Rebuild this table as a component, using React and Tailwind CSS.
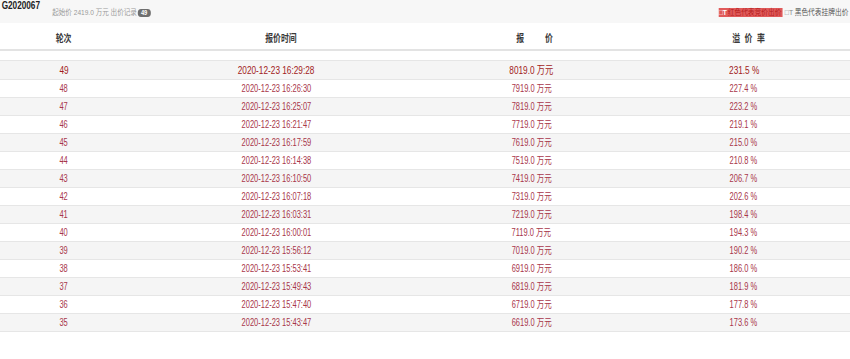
import React from "react";

const rows = [
  ["48", "2020-12-23 16:26:30", "7919.0", "227.4"],
  ["47", "2020-12-23 16:25:07", "7819.0", "223.2"],
  ["46", "2020-12-23 16:21:47", "7719.0", "219.1"],
  ["45", "2020-12-23 16:17:59", "7619.0", "215.0"],
  ["44", "2020-12-23 16:14:38", "7519.0", "210.8"],
  ["43", "2020-12-23 16:10:50", "7419.0", "206.7"],
  ["42", "2020-12-23 16:07:18", "7319.0", "202.6"],
  ["41", "2020-12-23 16:03:31", "7219.0", "198.4"],
  ["40", "2020-12-23 16:00:01", "7119.0", "194.3"],
  ["39", "2020-12-23 15:56:12", "7019.0", "190.2"],
  ["38", "2020-12-23 15:53:41", "6919.0", "186.0"],
  ["37", "2020-12-23 15:49:43", "6819.0", "181.9"],
  ["36", "2020-12-23 15:47:40", "6719.0", "177.8"],
  ["35", "2020-12-23 15:43:47", "6619.0", "173.6"],
];

const font = { fontFamily: '"Liberation Sans", "Noto Sans CJK SC", sans-serif' };

// the page text is drawn a bit narrow, squeeze it horizontally
function Sq({ children, className = "" }) {
  return <span className={`inline-block whitespace-nowrap scale-x-[0.75] ${className}`}>{children}</span>;
}

function Cells({ r }) {
  return (
    <>
      <div className="w-[15%] text-center"><Sq>{r[0]}</Sq></div>
      <div className="w-[35%] text-center"><Sq>{r[1]}</Sq></div>
      <div className="w-[25%] text-center"><Sq>{r[2]} 万元</Sq></div>
      <div className="w-[25%] text-center"><Sq>{r[3]} %</Sq></div>
    </>
  );
}

export default function App() {
  return (
    <div className="h-[359px] w-[850px] overflow-hidden bg-white" style={font}>
      <div className="flex h-[23px] items-start justify-between bg-[#f7f7f7]">
        <div className="flex origin-left scale-x-[0.82] items-start whitespace-nowrap pl-[2px]">
          <span className="pt-[1px] text-[10px] font-bold leading-[10px] text-[#222]">G2020067</span>
          <span className="ml-[15px] mt-[8px] flex items-center text-[8px] leading-[9px] text-[#9a9a9a]">
            起始价 2419.0 万元 出价记录
            <span className="ml-[1px] inline-block rounded-full bg-[#6f6f6f] px-[4px] text-[7px] font-bold leading-[8px] text-white">49</span>
          </span>
        </div>
        <div className="mr-[2px] mt-[8px] flex items-center justify-end text-[8px] leading-[9px]">
          <span className="inline-block origin-right scale-x-[0.84] whitespace-nowrap">
            <span className="bg-[#e05a5a] pr-[1px] text-[#b51c1c]">
              <span className="mr-[1px] font-bold text-white">□T</span>
              红色代表竞价出价
            </span>
            <span className="ml-[3px] text-[#888]">□T</span>
            <span className="ml-[2px] text-[#555]">黑色代表挂牌出价</span>
          </span>
        </div>
      </div>

      <div className="mt-[6px] flex h-[22px] items-center border-b-2 border-[#e3e3e3] text-[10.5px] font-bold text-[#3a3a3a]">
        <div className="w-[15%] text-center"><Sq>轮次</Sq></div>
        <div className="w-[35%] pl-[10px] text-center"><Sq>报价时间</Sq></div>
        <div className="w-[25%] pl-[6px] text-center">
          <Sq>
            报<span className="inline-block w-[28px]" />价
          </Sq>
        </div>
        <div className="w-[25%] pl-[14px] text-center">
          <Sq className="tracking-[6px]">溢价率</Sq>
        </div>
      </div>

      <div className="h-[9px]" />

      <div className="flex h-[19px] items-center border-t border-[#e6e6e6] bg-[#f5f5f5] text-[11px] text-[#a21b1b]">
        <Cells r={["49", "2020-12-23 16:29:28", "8019.0", "231.5"]} />
      </div>

      {rows.map((r, i) => (
        <div
          key={r[0]}
          className={`flex h-[18px] items-center border-t border-[#e6e6e6] text-[10px] text-[#a8364a] ${
            i % 2 === 1 ? "bg-[#f5f5f5]" : "bg-white"
          }`}
        >
          <Cells r={r} />
        </div>
      ))}
      <div className="border-t border-[#e6e6e6]" />
    </div>
  );
}
